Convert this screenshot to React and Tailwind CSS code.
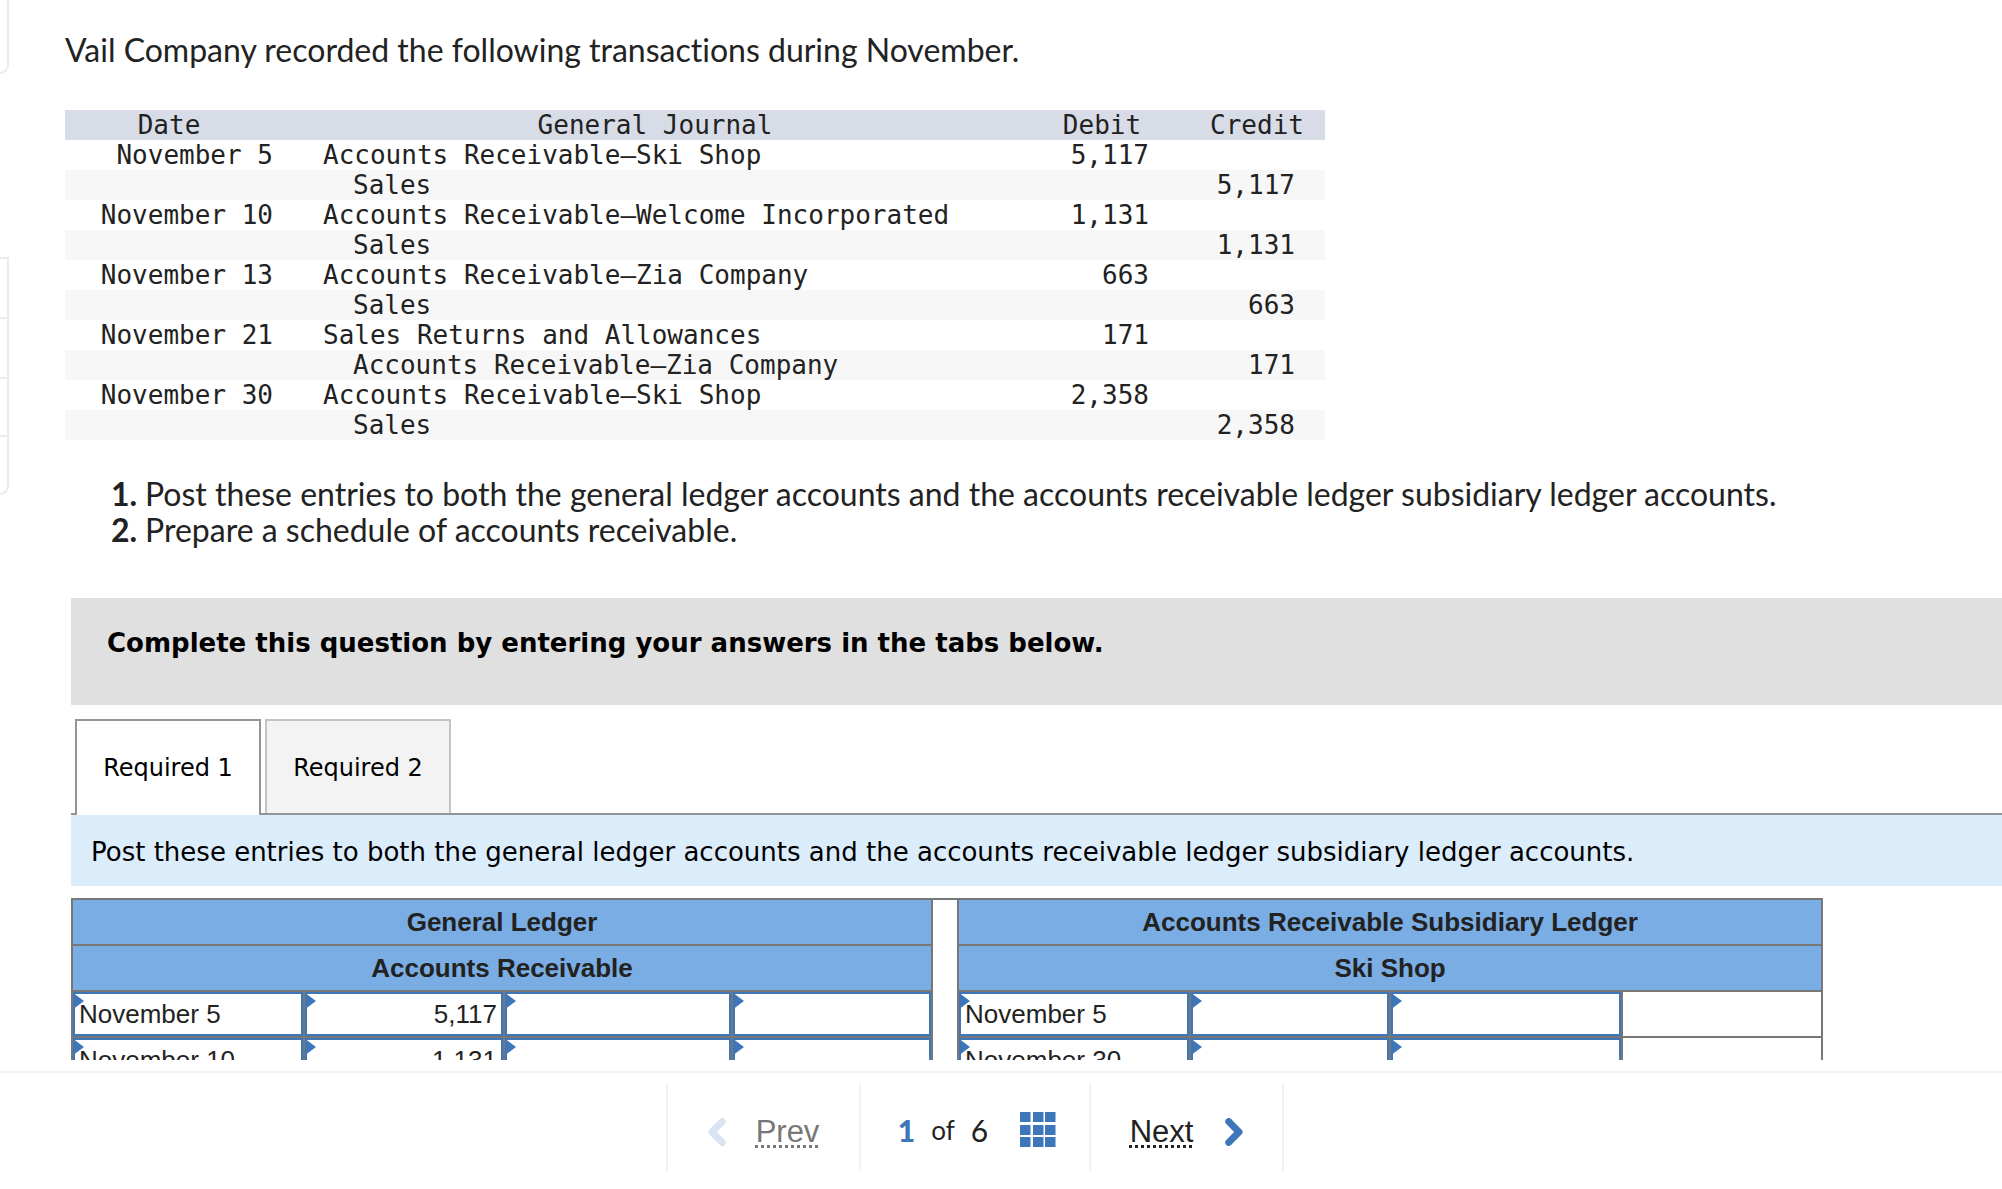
import { useState } from "react";
import { clsx } from "clsx";

const JOURNAL = [
  { date: "November 5", account: "Accounts Receivable—Ski Shop", debit: "5,117" },
  { account: "Sales", credit: "5,117" },
  { date: "November 10", account: "Accounts Receivable—Welcome Incorporated", debit: "1,131" },
  { account: "Sales", credit: "1,131" },
  { date: "November 13", account: "Accounts Receivable—Zia Company", debit: "663" },
  { account: "Sales", credit: "663" },
  { date: "November 21", account: "Sales Returns and Allowances", debit: "171" },
  { account: "Accounts Receivable—Zia Company", credit: "171" },
  { date: "November 30", account: "Accounts Receivable—Ski Shop", debit: "2,358" },
  { account: "Sales", credit: "2,358" },
];

const LEDGER = [
  { general: ["November 5", "5,117", "", ""], subsidiary: ["November 5", "", ""] },
  { general: ["November 10", "1,131", "", ""], subsidiary: ["November 30", "", ""] },
];

const TABS = ["Required 1", "Required 2"];

function JournalTable() {
  return (
    <table className="w-[1260px] mt-[42px] table-fixed border-collapse font-['DejaVu_Sans_Mono',monospace] text-[26px] leading-[30px]">
      <colgroup>
        <col className="w-[230px]" />
        <col className="w-[720px]" />
        <col className="w-[174px]" />
        <col className="w-[136px]" />
      </colgroup>
      <thead>
        <tr className="bg-[#d8dce7]">
          <th className="p-0 pr-[22px] font-normal">Date</th>
          <th className="p-0 font-normal">General Journal</th>
          <th className="p-0 font-normal">Debit</th>
          <th className="p-0 font-normal">Credit</th>
        </tr>
      </thead>
      <tbody>
        {JOURNAL.map((row, i) => (
          <tr key={i} className="h-[30px] even:bg-[#f7f7f7]">
            <td className="p-0 pr-[22px] text-right">{row.date}</td>
            <td className={clsx("p-0", row.date ? "pl-7" : "pl-[58px]")}>{row.account}</td>
            <td className="p-0 pr-10 text-right">{row.debit}</td>
            <td className="p-0 pr-[30px] text-right">{row.credit}</td>
          </tr>
        ))}
      </tbody>
    </table>
  );
}

function AnswerCell({ label, initial, numeric }) {
  const [value, setValue] = useState(initial);

  return (
    <td className="border-2 border-[#777] p-0">
      <div className="relative">
        <input
          type="text"
          aria-label={label}
          value={value}
          onChange={(e) => setValue(e.target.value)}
          className={clsx(
            "block w-full h-11 border-2 border-[#3d77b9] bg-white outline-none focus:bg-[#fffbe6]",
            numeric ? "pr-1 text-right" : "pl-1"
          )}
        />
        <svg className="absolute left-0.5 top-0.5 h-[14px] w-[9px]" viewBox="0 0 9 14" aria-hidden>
          <path d="M0 0.3 L9 7 L0 13.7 Z" fill="#3d77b9" />
        </svg>
      </div>
    </td>
  );
}

function LedgerTable() {
  const head = "h-[46px] border-2 border-[#777] bg-[#7aade3] p-0 font-bold";

  return (
    <table className="w-[1752px] mt-3 table-fixed border-collapse font-['Liberation_Sans',Arial,sans-serif] text-[26px] leading-[30px]">
      <colgroup>
        <col className="w-[232px]" />
        <col className="w-[200px]" />
        <col className="w-[228px]" />
        <col className="w-[200px]" />
        <col className="w-[26px]" />
        <col className="w-[232px]" />
        <col className="w-[200px]" />
        <col className="w-[232px]" />
        <col className="w-[200px]" />
      </colgroup>
      <thead>
        <tr>
          <th colSpan={4} className={head}>General Ledger</th>
          <td className="border-t-2 border-[#777] p-0" />
          <th colSpan={4} className={head}>Accounts Receivable Subsidiary Ledger</th>
        </tr>
        <tr>
          <th colSpan={4} className={head}>Accounts Receivable</th>
          <td className="p-0" />
          <th colSpan={4} className={head}>Ski Shop</th>
        </tr>
      </thead>
      <tbody>
        {LEDGER.map((row, i) => (
          <tr key={i} className="h-[46px]">
            {row.general.map((v, c) => (
              <AnswerCell key={c} label={`General ledger row ${i + 1} column ${c + 1}`} initial={v} numeric={c % 2 === 1} />
            ))}
            <td className="p-0" />
            {row.subsidiary.map((v, c) => (
              <AnswerCell key={c} label={`Ski Shop row ${i + 1} column ${c + 1}`} initial={v} numeric={c % 2 === 1} />
            ))}
            <td className="border-2 border-[#777] p-0" />
          </tr>
        ))}
      </tbody>
    </table>
  );
}

function SideRail() {
  return (
    <aside className="w-[9px] shrink-0">
      <div className="h-[74px] rounded-br-xl border-r-2 border-b-2 border-[#ebebeb]" />
      <div className="mt-[183px] rounded-br-xl border-2 border-l-0 border-[#ebebeb]">
        <div className="h-[58px]" />
        <div className="h-[60px] border-t-2 border-[#ebebeb]" />
        <div className="h-[58px] border-t-2 border-[#ebebeb]" />
        <div className="h-[58px] border-t-2 border-[#ebebeb]" />
      </div>
    </aside>
  );
}

function Chevron({ flip }) {
  return (
    <svg className="h-7 w-[18px]" viewBox="0 0 18 28" fill="none" aria-hidden>
      <path
        d={flip ? "M14.2 3.6 L4 14 L14.2 24.4" : "M3.8 3.6 L14 14 L3.8 24.4"}
        stroke="currentColor"
        strokeWidth="7"
        strokeLinecap="round"
        strokeLinejoin="round"
      />
    </svg>
  );
}

function PageGrid() {
  return (
    <svg className="h-9 w-9" viewBox="0 0 36 36" fill="#3d77b9" aria-hidden>
      {[0, 13, 25].map((y) =>
        [0, 13, 25].map((x) => <rect key={`${x}-${y}`} x={x} y={y} width="10.5" height="10" />)
      )}
    </svg>
  );
}

function Pager() {
  const dotted = "underline decoration-dotted decoration-[3px] underline-offset-[3px]";

  return (
    <footer className="mt-[11px] flex h-[118px] shrink-0 items-start justify-center border-t-2 border-[#f2f2f2] pt-[10px] pr-[52px]">
      <nav aria-label="Questions" className="flex h-[88px] font-['Liberation_Sans',Arial,sans-serif] text-[31px]">
        <button type="button" disabled className="flex w-[193px] items-center justify-center gap-[30px] border-l-2 border-[#f2f2f2] pt-2.5 text-[#777]">
          <span className="text-[#d8e4f1]"><Chevron flip /></span>
          <span className={dotted}>Prev</span>
        </button>
        <div className="flex w-[230px] items-center justify-center border-l-2 border-[#f2f2f2] pt-1.5 pl-1 font-[Lato,sans-serif] text-[30px]">
          <b className="font-black text-[#3d77b9]">1</b>
          <span className="ml-4 text-[26px]">of</span>
          <span className="ml-4">6</span>
          <button type="button" aria-label="All questions" className="ml-8"><PageGrid /></button>
        </div>
        <button type="button" className="flex w-[195px] items-center justify-center gap-8 border-x-2 border-[#f2f2f2] pt-2.5">
          <span className={dotted}>Next</span>
          <span className="text-[#3d77b9]"><Chevron /></span>
        </button>
      </nav>
    </footer>
  );
}

export default function App() {
  const [tab, setTab] = useState(0);

  return (
    <div className="flex h-screen flex-col overflow-hidden bg-white text-[#222]">
      <div className="flex min-h-0 flex-1 overflow-hidden">
        <SideRail />
        <main className="min-w-0 flex-1 overflow-hidden pt-8 pl-14">
          <p className="font-[Lato,sans-serif] text-[32px] leading-9 [font-variant-ligatures:none]">
            Vail Company recorded the following transactions during November.
          </p>

          <JournalTable />

          <ol className="mt-9 list-decimal pl-20 font-[Lato,sans-serif] text-[32px] leading-9 marker:font-bold [font-variant-ligatures:none]">
            <li>Post these entries to both the general ledger accounts and the accounts receivable ledger subsidiary ledger accounts.</li>
            <li>Prepare a schedule of accounts receivable.</li>
          </ol>

          <section className="mt-[50px] pl-1.5 font-['DejaVu_Sans',Verdana,sans-serif] text-[26px] leading-8 text-black">
            <h2 className="bg-[#e0e0e0] pt-[29px] pb-[46px] pl-9 font-bold">
              Complete this question by entering your answers in the tabs below.
            </h2>

            <div role="tablist" className="mt-3.5 flex items-start gap-1 border-b-2 border-[#949494] pl-1 text-2xl">
              {TABS.map((name, i) => (
                <button
                  key={name}
                  type="button"
                  role="tab"
                  aria-selected={tab === i}
                  onClick={() => setTab(i)}
                  className={clsx(
                    "w-[186px] border-2 border-b-0",
                    tab === i ? "-mb-0.5 h-24 border-[#949494] bg-white" : "h-[94px] border-[#c4c4c4] bg-[#f3f3f3] pt-0.5"
                  )}
                >
                  {name}
                </button>
              ))}
            </div>

            <p className="bg-[#dbecfb] pt-[21px] pb-[18px] pl-5">
              Post these entries to both the general ledger accounts and the accounts receivable ledger subsidiary ledger accounts.
            </p>

            <div className="text-[#222]">
              <LedgerTable />
            </div>
          </section>
        </main>
      </div>
      <Pager />
    </div>
  );
}
